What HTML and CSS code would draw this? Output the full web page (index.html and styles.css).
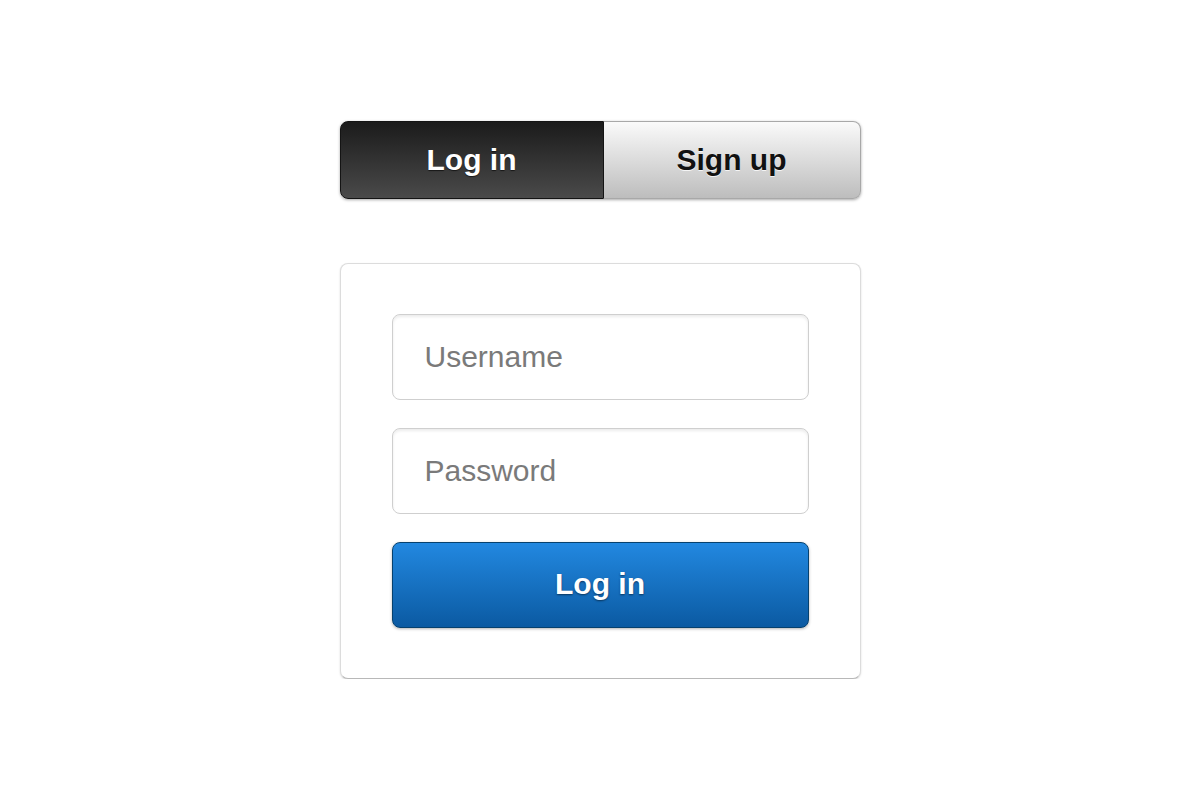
FILE: index.html
```html
<!DOCTYPE html>
<html>
<head>
<meta charset="utf-8">
<link rel="stylesheet" href="styles.css">
</head>
<body>
<div class="wrap">
  <div class="segment">
    <div class="seg seg-active">Log in</div>
    <div class="seg seg-idle">Sign up</div>
  </div>
  <form class="card">
    <input class="field" type="text" placeholder="Username">
    <input class="field" type="password" placeholder="Password">
    <button class="btn" type="button">Log in</button>
  </form>
</div>
</body>
</html>
```
FILE: styles.css
```css
html, body {
  margin: 0;
  padding: 0;
  background: #ffffff;
  font-family: "Liberation Sans", Arial, Helvetica, sans-serif;
}
.wrap {
  width: 521px;
  margin: 121px auto 0;
  display: flex;
  flex-direction: column;
  gap: 64px;
}
.segment {
  display: flex;
  height: 78px;
  border-radius: 8px;
  box-shadow: 0 1px 3px rgba(0,0,0,0.35);
}
.seg {
  display: flex;
  align-items: center;
  justify-content: center;
  font-size: 30px;
  font-weight: bold;
  box-sizing: border-box;
}
.seg-active {
  width: 264px;
  color: #ffffff;
  background: linear-gradient(#1b1b1b, #4a4a4a);
  border: 1px solid #141414;
  border-radius: 8px 0 0 8px;
  text-shadow: 0 1px 1px rgba(0,0,0,0.6);
}
.seg-idle {
  flex: 1;
  color: #111111;
  background: linear-gradient(#fafafa, #bdbdbd);
  border: 1px solid #a8a8a8;
  border-left: none;
  border-radius: 0 8px 8px 0;
  text-shadow: 0 1px 0 rgba(255,255,255,0.8);
}
.card {
  margin: 0;
  display: flex;
  flex-direction: column;
  gap: 28px;
  padding: 50px 51px 50px 51px;
  border: 1px solid #dcdcdc;
  border-bottom-color: #b8b8b8;
  border-radius: 8px;
  box-shadow: 0 1px 2px rgba(0,0,0,0.15);
  background: #ffffff;
}
.field {
  box-sizing: border-box;
  height: 86px;
  width: 100%;
  margin: 0;
  padding: 0 32px;
  border: 1px solid #cfcfcf;
  border-radius: 8px;
  box-shadow: inset 0 2px 3px rgba(0,0,0,0.08);
  font-family: "Liberation Sans", Arial, Helvetica, sans-serif;
  font-size: 30px;
  color: #222;
  background: #fff;
  outline: none;
}
.field::placeholder {
  color: #7a7a7a;
}
.btn {
  box-sizing: border-box;
  height: 86px;
  width: 100%;
  margin: 0;
  padding-bottom: 3px;
  border: 1px solid #06416e;
  border-radius: 8px;
  background: linear-gradient(#2288e0, #0b5aa2);
  color: #ffffff;
  font-family: "Liberation Sans", Arial, Helvetica, sans-serif;
  font-size: 30px;
  font-weight: bold;
  text-shadow: 0 1px 2px rgba(0,0,0,0.5);
  box-shadow: 0 1px 3px rgba(0,0,0,0.3);
  cursor: pointer;
}
```
